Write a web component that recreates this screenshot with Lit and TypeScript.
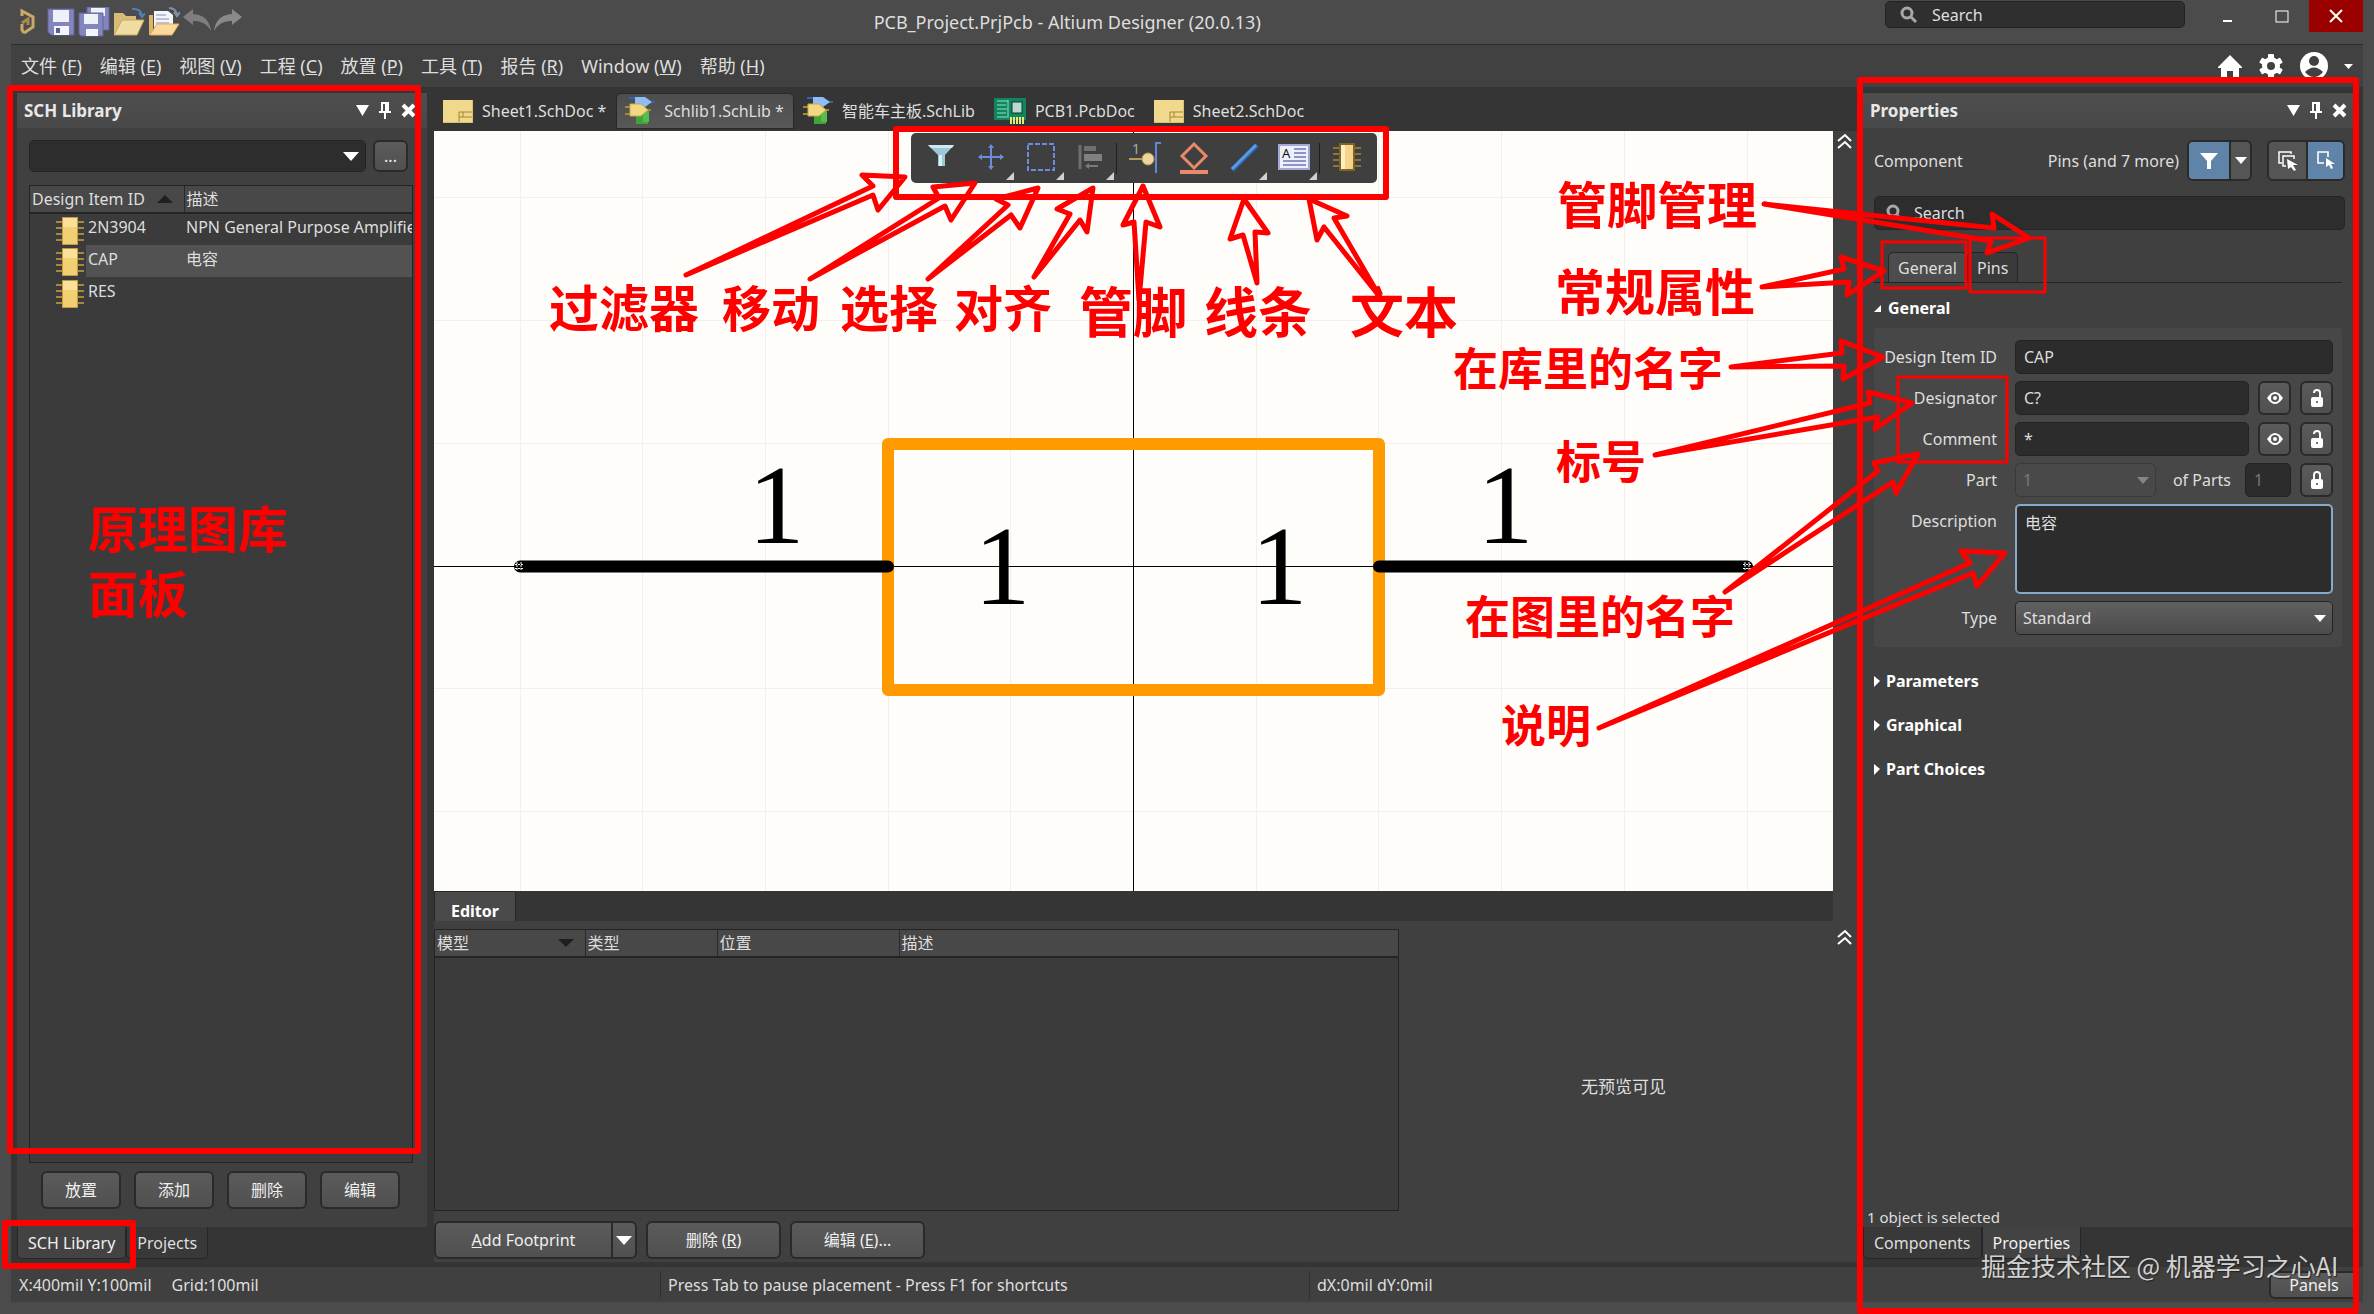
import { LitElement, html, svg, css } from "lit";
import { customElement, state } from "lit/decorators.js";
import { classMap } from "lit/directives/class-map.js";

type Point = [number, number];

/* ---------- icons ---------- */

const logoIcon = () => html`<svg width="18" height="28" viewBox="0 0 18 28" aria-hidden="true">
  <path d="M3 8 V3 L14 9 V19 L5 25 M3 16 V22 L5 25" fill="none" stroke="#c9a86b" stroke-width="3" />
  <path d="M3 15 L9 11 V17" fill="none" stroke="#a98a4e" stroke-width="3" />
</svg>`;

const floppy = svg`
  <path d="M1 1 H27 V27 H4 L1 24 Z" fill="#8385bd" stroke="#6264a0" stroke-width="1" />
  <rect x="6" y="2" width="16" height="12" fill="#eef2f8" />
  <rect x="7" y="18" width="15" height="9" fill="#f4f5fa" />
  <rect x="9" y="20" width="4" height="5" fill="#5b5d94" />`;

const saveIcon = () => html`<svg width="28" height="28" viewBox="0 0 28 28" aria-hidden="true">${floppy}</svg>`;

const saveAllIcon = () => html`<svg width="32" height="30" viewBox="0 0 32 30" aria-hidden="true">
  <path d="M9 0 H31 V23 H9 Z" fill="#8385bd" stroke="#6264a0" />
  <rect x="13" y="1" width="14" height="8" fill="#eef2f8" />
  <path d="M1 6 H25 V29 H3 L1 27 Z" fill="#8385bd" stroke="#6264a0" />
  <rect x="6" y="7" width="14" height="10" fill="#eef2f8" />
  <rect x="8" y="22" width="12" height="7" fill="#f4f5fa" />
</svg>`;

const openFolderIcon = () => html`<svg width="32" height="30" viewBox="0 0 32 30" aria-hidden="true">
  <path d="M1 6 H10 L13 9 H23 V28 H1 Z" fill="#d9bb78" />
  <path d="M1 28 L9 13 H31 L24 28 Z" fill="#f0dca0" stroke="#c7a660" />
  <path d="M19 2 Q28 1 29 9 M26 6 L29 10 L32 6" fill="none" stroke="#4c82b8" stroke-width="2" />
</svg>`;

const openDocIcon = () => html`<svg width="32" height="30" viewBox="0 0 32 30" aria-hidden="true">
  <path d="M1 8 H5 V28 H1 Z" fill="#e0b467" />
  <path d="M6 4 H20 L25 8 V24 H6 Z" fill="#f3f5fa" />
  <path d="M8 8 H18 M8 12 H21 M8 16 H21" stroke="#7f8fc0" stroke-width="1" />
  <path d="M2 28 L9 17 H31 L24 28 Z" fill="#fbd99b" stroke="#e2ae5c" />
  <path d="M21 1 Q28 1 29 8 M26 5 L29 9 L32 5" fill="none" stroke="#7f93a5" stroke-width="2" />
</svg>`;

const undoIcon = () => html`<svg width="28" height="26" viewBox="0 0 28 26" aria-hidden="true">
  <path d="M0 8 L10 0 V5 Q26 6 28 22 Q22 11 10 12 V16 Z" fill="#7e7e7e" />
</svg>`;

const redoIcon = () => html`<svg width="28" height="26" viewBox="0 0 28 26" aria-hidden="true">
  <path d="M28 8 L18 0 V5 Q2 6 0 22 Q6 11 18 12 V16 Z" fill="#8a8a8a" />
</svg>`;

const magnifierIcon = () => html`<svg width="18" height="18" viewBox="0 0 18 18" aria-hidden="true">
  <circle cx="7" cy="7" r="5" fill="none" stroke="#a8a8a8" stroke-width="3" />
  <path d="M11 11 L16 16" stroke="#a8a8a8" stroke-width="3" />
</svg>`;

const homeIcon = () => html`<svg width="24" height="24" viewBox="0 0 24 24" aria-hidden="true">
  <path d="M12 1 L24 13 V14 H21 V24 H15 V17 H9 V24 H3 V14 H0 V13 Z" fill="#fff" />
</svg>`;

const gearIcon = () => html`<svg width="26" height="26" viewBox="0 0 26 26" aria-hidden="true">
  <g fill="#fff">
    ${[0, 60, 120].map((a) => svg`<rect x="10" y="1" width="6" height="24" rx="1" transform="rotate(${a} 13 13)" />`)}
    <circle cx="13" cy="13" r="9" />
  </g>
  <circle cx="13" cy="13" r="4" fill="#414141" />
</svg>`;

const userIcon = () => html`<svg width="28" height="28" viewBox="0 0 28 28" aria-hidden="true">
  <circle cx="14" cy="14" r="14" fill="#fff" />
  <circle cx="14" cy="9" r="5" fill="#414141" />
  <path d="M5 20 Q14 11 23 20 Q19 25 14 25 Q9 25 5 20 Z" fill="#414141" />
</svg>`;

const triangleDown = (w: number, h: number, color = "#fff") =>
  html`<svg class="tri" width=${w} height=${h} viewBox="0 0 10 10" preserveAspectRatio="none" aria-hidden="true">
    <path d="M0 0 H10 L5 10 Z" fill=${color} />
  </svg>`;

const pinIcon = () => html`<svg width="12" height="18" viewBox="0 0 12 18" aria-hidden="true">
  <path d="M2 0 H10 V9 H12 V11 H7 V17 H5 V11 H0 V9 H2 Z M4 2 V9 H6 V2 Z" fill="#fff" fill-rule="evenodd" />
</svg>`;

const closeIcon = () => html`<svg width="15" height="15" viewBox="0 0 15 15" aria-hidden="true">
  <path d="M2 2 L13 13 M13 2 L2 13" stroke="#fff" stroke-width="4" />
</svg>`;

const chipIcon = () => html`<svg width="28" height="28" viewBox="0 0 28 28" aria-hidden="true">
  <path d="M0 5 H28 M0 11 H28 M0 17 H28 M0 23 H28" stroke="#a8893a" stroke-width="2" />
  <rect x="6" y="0" width="16" height="28" fill="#c29c45" />
  <rect x="7" y="1" width="14" height="26" fill="#f3cf74" />
  <rect x="7" y="1" width="14" height="9" fill="#fbe09a" />
</svg>`;

const sheetIcon = () => html`<svg width="30" height="23" viewBox="0 0 30 23" aria-hidden="true">
  <rect width="30" height="23" fill="#f0d98c" />
  <path d="M0 23 H30 V0" fill="none" stroke="#c9ab52" stroke-width="1" />
  <path d="M16 22 V12 H29 M16 17 H29 M20 12 V17" fill="none" stroke="#a5852f" stroke-width="1" />
</svg>`;

const schlibIcon = () => html`<svg width="30" height="30" viewBox="0 0 30 30" aria-hidden="true">
  <path d="M4 2 H12 M4 10 H12 M24 6 H30" stroke="#2f63b5" stroke-width="2" />
  <path d="M10 1 H20 L27 6 L20 11 H10 Z" fill="#8fbdf5" />
  <path d="M11 18 H23 V28 H11 Z" fill="#3fa53a" />
  <path d="M18 15 H24 V26 H18 Z" fill="#58bd4c" />
  <path d="M0 11 H8 M0 18 H8 M20 14 H26" stroke="#a58a35" stroke-width="2" />
  <path d="M5 8 H16 L23 14 L16 20 H5 Z" fill="#f3d783" stroke="#c9a94e" />
</svg>`;

const pcbIcon = () => html`<svg width="32" height="26" viewBox="0 0 32 26" aria-hidden="true">
  <rect width="32" height="22" fill="#10855e" />
  <path d="M3 3 H14 M3 7 H12 M3 11 H13 M3 15 H12 M3 19 H13 M14 2 V20" stroke="#8fe5be" stroke-width="1" />
  <rect x="18" y="4" width="10" height="11" fill="#bcd8d2" stroke="#063f2c" />
  <path d="M17 19 V26 M20 19 V26 M23 19 V26 M26 19 V26 M29 19 V26" stroke="#e3ea76" stroke-width="2" />
</svg>`;

const chevronsUp = () => html`<svg width="15" height="17" viewBox="0 0 15 17" aria-hidden="true">
  <path d="M1 8 L8 2 L14 8 M1 15 L8 9 L14 15" fill="none" stroke="#fff" stroke-width="2" />
</svg>`;

const funnelIcon = () => html`<svg width="18" height="18" viewBox="0 0 18 18" aria-hidden="true">
  <path d="M0 1 H18 L11 9 V17 H7 V9 Z" fill="#fff" />
</svg>`;

const pickAllIcon = () => html`<svg width="20" height="20" viewBox="0 0 20 20" aria-hidden="true">
  <path d="M4 12 H1 V1 H13 V3" fill="none" stroke="#fff" stroke-width="1.5" />
  <path d="M8 15 H5 V5 H16 V8" fill="none" stroke="#fff" stroke-width="1.5" />
  <path d="M9 8 L20 14 H15 L18 19 L16 20 L13 16 L10 18 Z" fill="#fff" />
</svg>`;

const pickOneIcon = () => html`<svg width="20" height="20" viewBox="0 0 20 20" aria-hidden="true">
  <path d="M8 12 H2 V1 H12 V6" fill="none" stroke="#fff" stroke-width="1.6" />
  <path d="M10 7 L19 13 H15 L17 17 L15 18 L13 14 L10 16 Z" fill="#fff" />
</svg>`;

const eyeIcon = () => html`<svg width="16" height="12" viewBox="0 0 16 12" aria-hidden="true">
  <path d="M0 6 Q8 -6 16 6 Q8 18 0 6 Z" fill="#fff" />
  <circle cx="8" cy="6" r="4" fill="#555" />
  <circle cx="8" cy="6" r="2" fill="#fff" />
</svg>`;

const lockIcon = (open: boolean) => html`<svg width="12" height="18" viewBox="0 0 12 18" aria-hidden="true">
  <path d=${open ? "M3 4 Q3 1 6 1 Q9 1 9 4 V9" : "M3 9 V4 Q3 1 6 1 Q9 1 9 4 V9"} fill="none" stroke="#fff" stroke-width="2" />
  <rect x="0" y="8" width="12" height="10" rx="2" fill="#fff" />
  <circle cx="6" cy="13" r="1" fill="#444" />
</svg>`;

/* ---------- floating tool bar ---------- */

interface Tool {
  label: string;
  menu?: boolean;
  icon: unknown;
}

const toolGroups: Tool[][] = [
  [
    {
      label: "过滤器",
      icon: svg`<path d="M4 5 H30 L21 15 V26 H14 V15 Z" fill="#9cc9d8" />
        <path d="M4 5 H30 L28 8 H7 Z" fill="#cfe9f0" /><path d="M15 15 H18 V26 H15 Z" fill="#d9eff5" />`,
    },
    {
      label: "移动",
      menu: true,
      icon: svg`<path d="M17 5 V29 M5 17 H29" stroke="#6c8cdb" stroke-width="2" />
        <path d="M17 4 L20 8 H14 Z M17 30 L20 26 H14 Z M4 17 L8 14 V20 Z M30 17 L26 14 V20 Z" fill="#6c8cdb" />`,
    },
    {
      label: "选择",
      menu: true,
      icon: svg`<rect x="4" y="4" width="26" height="26" fill="none" stroke="#6c8cdb" stroke-width="2" stroke-dasharray="5 2" />`,
    },
    {
      label: "对齐",
      menu: true,
      icon: svg`<path d="M6 5 V29" stroke="#6f6f6f" stroke-width="3" />
        <rect x="10" y="6" width="12" height="5" fill="#707070" /><rect x="10" y="14" width="18" height="7" fill="#808080" />
        <path d="M11 26 L15 23 V25 H24 V27 H15 V29 Z" fill="#7a7a7a" />`,
    },
  ],
  [
    {
      label: "管脚",
      icon: svg`<text x="5" y="14" class="pin-no">1</text><path d="M2 19 H16" stroke="#b79a5a" stroke-width="2" />
        <circle cx="21" cy="19" r="6" fill="#ecd49a" stroke="#b79a5a" />
        <path d="M34 3 H29 V33" fill="none" stroke="#5f86d8" stroke-width="2" />`,
    },
    {
      label: "端口",
      icon: svg`<path d="M17 4 L29 16 L17 28 L5 16 Z" fill="none" stroke="#e8896a" stroke-width="3" />
        <rect x="3" y="30" width="28" height="4" fill="#e8896a" />`,
    },
    {
      label: "线条",
      menu: true,
      icon: svg`<path d="M5 30 L30 5" stroke="#2c64b4" stroke-width="5" /><path d="M5 29 L29 5" stroke="#5a9be6" stroke-width="3" />`,
    },
    {
      label: "文本",
      menu: true,
      icon: svg`<rect x="2" y="5" width="30" height="24" fill="#edf0fa" stroke="#a3a8d8" stroke-width="2" />
        <text x="5" y="18" class="text-a">A</text>
        <path d="M17 9 H29 M17 13 H29 M17 17 H29 M6 21 H29 M6 25 H29" stroke="#8f94c4" stroke-width="2" />`,
    },
  ],
  [{ label: "器件", icon: svg`<g transform="translate(3 3)">
      <path d="M0 5 H28 M0 11 H28 M0 17 H28 M0 23 H28" stroke="#8b7437" stroke-width="2" />
      <rect x="6" y="0" width="16" height="28" fill="#7d6423" />
      <rect x="8" y="2" width="12" height="24" fill="#f6d58a" /><rect x="8" y="2" width="4" height="24" fill="#ffeec4" />
    </g>` }],
];

/* ---------- content ---------- */

const menus: [string, string][] = [
  ["文件", "F"], ["编辑", "E"], ["视图", "V"], ["工程", "C"], ["放置", "P"],
  ["工具", "T"], ["报告", "R"], ["Window", "W"], ["帮助", "H"],
];

const documents = [
  { name: "Sheet1.SchDoc *", icon: sheetIcon },
  { name: "Schlib1.SchLib *", icon: schlibIcon },
  { name: "智能车主板.SchLib", icon: schlibIcon },
  { name: "PCB1.PcbDoc", icon: pcbIcon },
  { name: "Sheet2.SchDoc", icon: sheetIcon },
];

const parts = [
  { id: "2N3904", text: "NPN General Purpose Amplifier" },
  { id: "CAP", text: "电容" },
  { id: "RES", text: "" },
];

/* Each arrow: tail, near junction, near barb, tip, far barb, far junction. */
const arrows: Point[][] = [
  [[686, 275], [873, 186], [862, 175], [905, 177], [878, 210], [873, 195]],
  [[810, 279], [939, 198], [933, 187], [975, 183], [951, 220], [945, 206]],
  [[928, 279], [1008, 205], [996, 199], [1038, 188], [1020, 228], [1011, 215]],
  [[1034, 277], [1070, 214], [1057, 209], [1093, 188], [1087, 232], [1080, 220]],
  [[1139, 300], [1134, 222], [1123, 225], [1143, 186], [1160, 227], [1146, 222]],
  [[1257, 283], [1243, 235], [1230, 239], [1244, 199], [1268, 233], [1255, 232]],
  [[1380, 297], [1324, 227], [1317, 240], [1309, 199], [1347, 216], [1334, 218]],
  [[1764, 204], [1994, 228], [1992, 214], [2029, 238], [1987, 253], [1991, 241]],
  [[1762, 287], [1844, 269], [1841, 257], [1884, 271], [1847, 295], [1849, 282]],
  [[1731, 367], [1842, 353], [1841, 341], [1883, 357], [1843, 379], [1844, 366]],
  [[1655, 455], [1870, 403], [1868, 392], [1912, 403], [1875, 429], [1878, 417]],
  [[1725, 592], [1878, 471], [1874, 463], [1918, 454], [1896, 493], [1893, 482]],
  [[1599, 728], [1970, 563], [1961, 551], [2005, 553], [1977, 586], [1973, 573]],
];

const notes: { x: number; y: number; size: number; text: string }[] = [
  { x: 549, y: 327, size: 50, text: "过滤器" },
  { x: 722, y: 327, size: 49, text: "移动" },
  { x: 840, y: 327, size: 49, text: "选择" },
  { x: 954, y: 327, size: 49, text: "对齐" },
  { x: 1079, y: 333, size: 54, text: "管脚" },
  { x: 1204, y: 333, size: 54, text: "线条" },
  { x: 1350, y: 333, size: 54, text: "文本" },
  { x: 1557, y: 224, size: 50, text: "管脚管理" },
  { x: 1555, y: 311, size: 50, text: "常规属性" },
  { x: 1453, y: 386, size: 45, text: "在库里的名字" },
  { x: 1556, y: 479, size: 45, text: "标号" },
  { x: 1465, y: 634, size: 45, text: "在图里的名字" },
  { x: 1501, y: 743, size: 45, text: "说明" },
  { x: 88, y: 548, size: 50, text: "原理图库" },
  { x: 88, y: 613, size: 50, text: "面板" },
];

const frames = [
  { x: 10, y: 88, w: 408, h: 1063, s: 6 },
  { x: 5, y: 1223, w: 128, h: 43, s: 6 },
  { x: 896, y: 129, w: 490, h: 68, s: 6 },
  { x: 1860, y: 80, w: 496, h: 1231, s: 6 },
  { x: 1882, y: 242, w: 84, h: 46, s: 3 },
  { x: 1970, y: 238, w: 75, h: 54, s: 3 },
  { x: 1898, y: 377, w: 109, h: 85, s: 3 },
];

@customElement("app-root")
export class AppRoot extends LitElement {
  @state() private activeDoc = 1;
  @state() private selectedPart = "CAP";

  static styles = css`
    :host {
      display: block;
      font-family: "Noto Sans", "Noto Sans CJK SC", sans-serif;
      font-size: 16px;
      line-height: 22px;
      color: #dedede;
    }
    * { box-sizing: border-box; }
    button, input, select, textarea { font: inherit; color: inherit; margin: 0; }
    button { padding: 0; border: 0; background: none; }
    svg { display: block; flex: none; }
    .app {
      position: relative;
      display: flex;
      flex-direction: column;
      height: 100vh;
      overflow: hidden;
      padding: 0 11px 12px;
      background: #4b4b4b;
    }

    /* title bar */
    .title-bar {
      flex: none;
      height: 44px;
      display: grid;
      grid-template-columns: 857fr auto 1095fr;
      background: #4b4b4b;
    }
    .quick { display: flex; align-items: center; padding-left: 8px; gap: 3px; }
    .quick button:first-child { margin-right: 7px; }
    .window-title { align-self: center; font-size: 18px; white-space: nowrap; }
    .window-side { display: flex; justify-content: flex-end; align-items: flex-start; }
    .top-search {
      display: flex; align-items: center; gap: 14px;
      width: 300px; height: 27px; padding: 0 14px;
      margin: 1px 16px 0 0;
      border: 1px solid #222; border-radius: 5px; background: #2f2f2f;
    }
    .bare { flex: 1; min-width: 0; padding: 0; border: 0; outline: 0; background: none; }
    .bare::placeholder { color: #dedede; opacity: 1; }
    .win { width: 54px; height: 32px; display: grid; place-items: center; }
    .win.close { background: #9b0000; }

    /* menu bar */
    .menu-bar {
      flex: none; height: 43px;
      display: flex; align-items: center; gap: 18px;
      padding: 0 10px;
      border-top: 1px solid #2c2c2c;
      background: #414141;
    }
    .menu-bar .entry { font-size: 18px; line-height: 26px; white-space: nowrap; }
    .account { margin-left: auto; display: flex; align-items: center; gap: 16px; }

    /* work area */
    .work {
      flex: 1; min-height: 0;
      display: grid;
      grid-template-columns: 410px minmax(0, 1fr) 495px;
      column-gap: 6px;
      padding: 0 5px 0 6px;
      background: #353535;
    }
    .dock { display: flex; flex-direction: column; min-height: 0; min-width: 0; padding-top: 6px; }
    .panel { flex: 1; min-height: 0; display: flex; flex-direction: column; background: #404040; }
    .panel-head {
      flex: none; height: 35px;
      display: flex; align-items: center; gap: 10px;
      padding: 0 11px 0 7px;
      background: linear-gradient(#4e4e4e, #484848);
    }
    .panel-head h2 { flex: 1; margin: 0; font-size: 17px; line-height: 24px; color: #e8e8e8; }
    .dock-tabs { flex: none; height: 40px; display: flex; align-items: flex-start; }
    .dock-tabs button {
      height: 32px; padding: 0 10px;
      border: 1px solid #262626; border-top: 0; border-radius: 0 0 5px 5px;
      background: #393939;
    }
    .dock-tabs button.on { background: #434343; color: #f0f0f0; }

    /* library panel */
    .lib-body { flex: 1; min-height: 0; display: flex; flex-direction: column; padding: 12px 14px 18px 12px; }
    .lib-filter { display: flex; gap: 7px; padding-right: 5px; margin-bottom: 13px; }
    .pick { display: grid; align-items: center; }
    .pick > * { grid-area: 1 / 1; }
    .pick > .tri { justify-self: end; margin-right: 7px; pointer-events: none; }
    .pick select {
      width: 100%; height: 100%; appearance: none; padding: 0 7px; outline: 0;
      border: 1px solid #242424; border-radius: 5px;
      background: linear-gradient(#606060, #4c4c4c);
    }
    .pick.dark { flex: 1; height: 32px; }
    .pick.dark select { background: #2d2d2d; }
    .btn {
      display: grid; place-items: center; height: 38px;
      border: 2px solid #2a2a2a; border-radius: 6px;
      background: linear-gradient(#5b5b5b, #505050);
      color: #f0f0f0; white-space: nowrap;
    }
    .btn.more { width: 35px; height: 32px; }
    .list { flex: 1; min-height: 0; overflow: hidden; border: 1px solid #232323; background: #3b3b3b; }
    table { width: 100%; border-collapse: collapse; table-layout: fixed; }
    th {
      font-weight: 400; text-align: left; white-space: nowrap;
      height: 27px; padding: 0 2px; background: #484848; border-bottom: 2px solid #252525;
    }
    th + th { border-left: 1px solid #2a2a2a; }
    td { height: 32px; padding: 0 0 5px 2px; white-space: nowrap; overflow: hidden; }
    .head-cell { display: flex; align-items: center; justify-content: space-between; padding-right: 9px; }
    .col-icon { width: 56px; }
    .col-id { width: 98px; }
    .col-model { width: 150px; }
    .col-type { width: 132px; }
    .col-place { width: 182px; }
    td.part-icon { padding: 2px 0 0 26px; }
    .list tr.on .value { background: #525252; }
    .lib-buttons { display: flex; gap: 13px; padding: 8px 0 0 12px; }
    .lib-buttons .btn { width: 80px; }

    /* document area */
    .center { display: flex; flex-direction: column; min-width: 0; min-height: 0; padding-left: 1px; }
    .doc-tabs { flex: none; height: 44px; display: flex; align-items: flex-end; padding-bottom: 2px; }
    .doc-tabs button {
      display: flex; align-items: center; gap: 9px;
      height: 36px; padding: 0 9px 0 8px; white-space: nowrap;
      border: 1px solid transparent; border-radius: 5px 5px 0 0;
    }
    .doc-tabs button.on { background: linear-gradient(#4d4d4d, #585858); border-color: #282828; }
    .canvas-row, .editor-row { display: flex; min-height: 0; }
    .canvas-row { flex: 1; }
    .editor-row { flex: none; height: 376px; border-bottom: 5px solid #353535; }
    .gutter { flex: none; width: 24px; display: flex; padding-left: 4px; background: #404040; }
    .gutter.low { padding-top: 36px; }
    .gutter button { height: 20px; }
    .canvas { position: relative; flex: 1; min-width: 0; background: #fffdfa; }
    .drawing { position: absolute; inset: 0; width: 100%; height: 100%; }
    .drawing .crisp { shape-rendering: crispEdges; }
    .pin-label { font-family: "Liberation Serif", serif; font-size: 113px; fill: #000; }
    .tool-layer { position: absolute; inset: 2px 0 auto 0; display: flex; justify-content: center; padding-left: 21px; }
    .tools { display: flex; align-items: center; height: 50px; padding: 0 5px; border-radius: 5px; background: #3f3f3f; }
    .tool { position: relative; width: 50px; height: 50px; display: grid; place-items: center; }
    .corner { position: absolute; right: 2px; bottom: 3px; }
    .tool-sep { width: 3px; height: 31px; border-left: 1px solid #1e1e1e; }
    .pin-no { font-size: 14px; fill: #aaaaaa; }
    .text-a { font-size: 13px; fill: #111; }

    /* model editor */
    .editor { flex: 1; min-width: 0; display: flex; flex-direction: column; background: #404040; }
    .editor-strip { flex: none; height: 30px; display: flex; background: #353535; }
    .editor-strip button {
      width: 82px; padding-top: 8px; font-weight: 700; color: #fff;
      border: 1px solid #262626; border-bottom: 0; background: #4a4a4a;
    }
    .editor-body { flex: 1; min-height: 0; display: grid; grid-template-columns: 965fr 434fr; padding: 8px 0 3px; }
    .models { display: flex; flex-direction: column; min-width: 0; }
    .model-buttons { display: flex; gap: 9px; padding-top: 10px; }
    .split { display: flex; width: 203px; }
    .split .btn:first-child { flex: 1; border-radius: 6px 0 0 6px; border-right-width: 1px; }
    .split .btn:last-child { width: 25px; border-radius: 0 6px 6px 0; border-left-width: 1px; }
    .w135 { width: 135px; }
    .preview { display: grid; place-items: center; padding: 0 0 14px 15px; font-size: 17px; }

    /* properties panel */
    .props { flex: 1; min-height: 0; display: flex; flex-direction: column; padding: 12px 16px 0 11px; }
    .scope { display: flex; align-items: center; height: 41px; margin-right: -3px; }
    .scope .kinds { margin-left: auto; padding-right: 8px; }
    .seg { display: flex; height: 41px; border: 2px solid #2a2a2a; border-radius: 6px; overflow: hidden; background: #555; }
    .seg button { width: 37px; display: grid; place-items: center; }
    .seg button + button { border-left: 2px solid #2a2a2a; }
    .seg button.blue { background: #5f84a8; }
    .seg .wide { width: 40px; }
    .seg .narrow { width: 21px; }
    .seg.pickers { margin-left: 15px; }
    .prop-search {
      display: flex; align-items: center; gap: 10px;
      height: 34px; margin-top: 15px; margin-right: -3px; padding: 0 11px;
      border: 1px solid #262626; border-radius: 5px; background: #2d2d2d;
    }
    .prop-tabs { display: flex; height: 31px; margin-top: 22px; padding-left: 14px; border-bottom: 1px solid #232323; }
    .prop-tabs button {
      padding: 0 9px; border: 1px solid #262626; border-bottom: 0; border-radius: 5px 5px 0 0; background: #3a3a3a;
    }
    .prop-tabs button.on { background: #4c4c4c; width: 79px; }
    .section {
      display: flex; align-items: center; gap: 6px;
      height: 44px; font-weight: 700; color: #fff; text-align: left;
    }
    .section.open { height: 34px; margin-top: 8px; gap: 7px; }
    .card {
      display: grid; grid-template-columns: 123px minmax(0, 1fr);
      column-gap: 18px; row-gap: 7px;
      margin: 3px 0 12px; padding: 12px 9px 12px 0;
      border-radius: 4px; background: #474747;
    }
    .card > label { text-align: right; line-height: 34px; white-space: nowrap; }
    .field {
      flex: 1; width: 100%; min-width: 0; height: 34px; padding: 0 8px; outline: 0;
      border: 1px solid #232323; border-radius: 5px; background: #2c2c2c;
    }
    textarea.field { display: block; height: 90px; padding: 6px 8px; resize: none; border: 2px solid #86a9cc; }
    .line { display: flex; align-items: center; gap: 9px; }
    .mini { width: 33px; height: 34px; flex: none; }
    .line .part { width: 141px; height: 34px; }
    .line .part select { background: #494949; border-color: #3a3a3a; color: #7a7a7a; opacity: 1; }
    .of-parts { flex: 1; text-align: right; padding-right: 5px; white-space: nowrap; }
    .field.count { flex: none; width: 46px; color: #777; }
    .kind { height: 34px; }
    .selection { margin-top: auto; padding: 0 4px; line-height: 20px; font-size: 15px; }

    /* status bar */
    .status { flex: none; height: 35px; display: flex; align-items: center; background: #404040; padding: 0 4px 0 8px; }
    .status .pos { width: 641px; display: flex; gap: 20px; white-space: nowrap; }
    .status .cell { padding-left: 7px; border-left: 1px solid #303030; line-height: 28px; white-space: nowrap; }
    .status .hint { width: 649px; }
    .status .btn { margin-left: auto; width: 90px; height: 28px; }

    /* annotation layer */
    .marks { position: absolute; inset: 0; width: 100%; height: 100%; pointer-events: none; }
    .marks .shape { fill: none; stroke: #ff0000; stroke-linejoin: round; }
    .note { font-family: "Noto Sans CJK SC", sans-serif; font-weight: 700; fill: #ff0000; }
    .credit { font-family: "Noto Sans CJK SC", sans-serif; font-size: 25px; fill: #d2d2d2; text-shadow: 1px 1px 1px #222; }
  `;

  private renderTitleBar() {
    return html`<header class="title-bar">
      <div class="quick">
        <button aria-label="Altium">${logoIcon()}</button>
        <button aria-label="保存">${saveIcon()}</button>
        <button aria-label="全部保存">${saveAllIcon()}</button>
        <button aria-label="打开">${openFolderIcon()}</button>
        <button aria-label="打开文档">${openDocIcon()}</button>
        <button aria-label="撤销">${undoIcon()}</button>
        <button aria-label="重做">${redoIcon()}</button>
      </div>
      <div class="window-title">PCB_Project.PrjPcb - Altium Designer (20.0.13)</div>
      <div class="window-side">
        <label class="top-search">${magnifierIcon()}<input class="bare" type="text" aria-label="Search" placeholder="Search" /></label>
        <button class="win" aria-label="最小化"><svg width="10" height="14"><path d="M0 12 H9" stroke="#fff" stroke-width="2" /></svg></button>
        <button class="win" aria-label="最大化"><svg width="14" height="13"><rect x="1" y="1" width="12" height="11" fill="none" stroke="#fff" /></svg></button>
        <button class="win close" aria-label="关闭"><svg width="14" height="14"><path d="M1 1 L13 13 M13 1 L1 13" stroke="#fff" stroke-width="2" /></svg></button>
      </div>
    </header>`;
  }

  private renderMenuBar() {
    return html`<nav class="menu-bar">
      ${menus.map(([name, key]) => html`<button class="entry">${name} (<u>${key}</u>)</button>`)}
      <div class="account">
        <button aria-label="主页">${homeIcon()}</button>
        <button aria-label="设置">${gearIcon()}</button>
        <button aria-label="帐户">${userIcon()}</button>
        <button aria-label="帐户菜单">${triangleDown(9, 5)}</button>
      </div>
    </nav>`;
  }

  private renderPanelHead(title: string) {
    return html`<div class="panel-head">
      <h2>${title}</h2>
      <button aria-label="面板菜单">${triangleDown(13, 11)}</button>
      <button aria-label="固定">${pinIcon()}</button>
      <button aria-label="关闭面板">${closeIcon()}</button>
    </div>`;
  }

  private renderLibrary() {
    return html`<aside class="dock">
      <section class="panel">
        ${this.renderPanelHead("SCH Library")}
        <div class="lib-body">
          <div class="lib-filter">
            <div class="pick dark"><select aria-label="过滤"><option></option></select>${triangleDown(16, 9)}</div>
            <button class="btn more" aria-label="更多">...</button>
          </div>
          <div class="list">
            <table>
              <colgroup><col class="col-icon" /><col class="col-id" /><col /></colgroup>
              <thead>
                <tr>
                  <th colspan="2"><div class="head-cell">Design Item ID
                    <svg width="16" height="8"><path d="M0 8 L8 0 L16 8 Z" fill="#1f1f1f" /></svg></div></th>
                  <th>描述</th>
                </tr>
              </thead>
              <tbody>
                ${parts.map((p) => html`<tr class=${classMap({ on: p.id === this.selectedPart })} @click=${() => (this.selectedPart = p.id)}>
                  <td class="part-icon">${chipIcon()}</td>
                  <td class="value">${p.id}</td>
                  <td class="value">${p.text}</td>
                </tr>`)}
              </tbody>
            </table>
          </div>
          <div class="lib-buttons">
            ${["放置", "添加", "删除", "编辑"].map((t) => html`<button class="btn">${t}</button>`)}
          </div>
        </div>
      </section>
      <div class="dock-tabs"><button class="on">SCH Library</button><button>Projects</button></div>
    </aside>`;
  }

  private renderDrawing() {
    const step = 122.7;
    const cols = Array.from({ length: 25 }, (_, i) => 1133.5 + (i - 12) * step);
    const rows = Array.from({ length: 15 }, (_, i) => 566 + (i - 7) * step);
    const handle = (x: number) => svg`<path d="M${x - 3} 562 V571 M${x + 1} 562 V571 M${x - 5} 564.5 H${x + 4} M${x - 5} 568.5 H${x + 4}"
      stroke="#fff" stroke-width="1" stroke-dasharray="2 1" />`;
    return html`<svg class="drawing" viewBox="434 131 1399 760" preserveAspectRatio="xMidYMid slice">
      <g class="crisp" stroke="#f4efec" stroke-width="1">
        ${cols.map((x) => svg`<path d="M${x} -500 V1600" />`)}
        ${rows.map((y) => svg`<path d="M-500 ${y} H2900" />`)}
      </g>
      <path class="crisp" d="M-500 566.5 H2900 M1133.5 -500 V1600" stroke="#000" stroke-width="1" />
      <rect x="888" y="444" width="491" height="246" fill="none" stroke="#ff9a00" stroke-width="12" stroke-linejoin="round" />
      <path d="M520 566.5 H888 M1379 566.5 H1747" stroke="#000" stroke-width="12" stroke-linecap="round" />
      ${handle(520)} ${handle(1748)}
      <text class="pin-label" x="748" y="543">1</text>
      <text class="pin-label" x="974" y="604">1</text>
      <text class="pin-label" x="1251" y="604">1</text>
      <text class="pin-label" x="1477" y="543">1</text>
    </svg>`;
  }

  private renderTools() {
    return html`<div class="tool-layer"><div class="tools">
      ${toolGroups.map((group, i) => html`
        ${i ? html`<span class="tool-sep"></span>` : null}
        ${group.map((t) => html`<button class="tool" aria-label=${t.label}>
          <svg width="34" height="36" viewBox="0 0 34 36" aria-hidden="true">${t.icon}</svg>
          ${t.menu ? html`<svg class="corner" width="8" height="8"><path d="M8 0 V8 H0 Z" fill="#d0d0d0" /></svg>` : null}
        </button>`)}`)}
    </div></div>`;
  }

  private renderCenter() {
    return html`<main class="center">
      <div class="doc-tabs">
        ${documents.map((d, i) => html`<button class=${classMap({ on: i === this.activeDoc })} @click=${() => (this.activeDoc = i)}>
          ${d.icon()}<span>${d.name}</span></button>`)}
      </div>
      <div class="canvas-row">
        <div class="canvas">${this.renderDrawing()}${this.renderTools()}</div>
        <div class="gutter"><button aria-label="展开">${chevronsUp()}</button></div>
      </div>
      <div class="editor-row">
        <section class="editor">
          <div class="editor-strip"><button>Editor</button></div>
          <div class="editor-body">
            <div class="models">
              <div class="list">
                <table>
                  <colgroup><col class="col-model" /><col class="col-type" /><col class="col-place" /><col /></colgroup>
                  <thead><tr>
                    <th><div class="head-cell">模型${triangleDown(16, 8, "#1f1f1f")}</div></th>
                    <th>类型</th><th>位置</th><th>描述</th>
                  </tr></thead>
                </table>
              </div>
              <div class="model-buttons">
                <div class="split">
                  <button class="btn"><span><u>A</u>dd Footprint</span></button>
                  <button class="btn" aria-label="更多模型">${triangleDown(16, 9)}</button>
                </div>
                <button class="btn w135"><span>删除 (<u>R</u>)</span></button>
                <button class="btn w135"><span>编辑 (<u>E</u>)...</span></button>
              </div>
            </div>
            <div class="preview">无预览可见</div>
          </div>
        </section>
        <div class="gutter low"><button aria-label="展开预览">${chevronsUp()}</button></div>
      </div>
    </main>`;
  }

  private renderProperties() {
    const closed = (t: string) => html`<button class="section">
      <svg width="6" height="11"><path d="M0 0 L6 5 L0 11 Z" fill="#fff" /></svg>${t}</button>`;
    return html`<aside class="dock">
      <section class="panel">
        ${this.renderPanelHead("Properties")}
        <div class="props">
          <div class="scope">
            <span>Component</span>
            <span class="kinds">Pins (and 7 more)</span>
            <div class="seg">
              <button class="blue wide" aria-label="过滤">${funnelIcon()}</button>
              <button class="narrow" aria-label="过滤菜单">${triangleDown(12, 7)}</button>
            </div>
            <div class="seg pickers">
              <button aria-label="选择全部">${pickAllIcon()}</button>
              <button class="blue" aria-label="选择单个">${pickOneIcon()}</button>
            </div>
          </div>
          <label class="prop-search">${magnifierIcon()}<input class="bare" type="text" aria-label="Search properties" placeholder="Search" /></label>
          <div class="prop-tabs"><button class="on">General</button><button>Pins</button></div>
          <button class="section open"><svg width="7" height="7"><path d="M7 0 V7 H0 Z" fill="#fff" /></svg>General</button>
          <div class="card">
            <label for="item">Design Item ID</label>
            <input id="item" class="field" type="text" .value=${"CAP"} />
            <label for="designator">Designator</label>
            <div class="line">
              <input id="designator" class="field" type="text" .value=${"C?"} />
              <button class="btn mini" aria-label="显示">${eyeIcon()}</button>
              <button class="btn mini" aria-label="锁定">${lockIcon(true)}</button>
            </div>
            <label for="comment">Comment</label>
            <div class="line">
              <input id="comment" class="field" type="text" .value=${"*"} />
              <button class="btn mini" aria-label="显示">${eyeIcon()}</button>
              <button class="btn mini" aria-label="锁定">${lockIcon(true)}</button>
            </div>
            <label for="part">Part</label>
            <div class="line">
              <div class="pick part"><select id="part" disabled><option>1</option></select>${triangleDown(12, 7, "#858585")}</div>
              <label class="of-parts" for="count">of Parts</label>
              <input id="count" class="field count" type="text" disabled .value=${"1"} />
              <button class="btn mini" aria-label="锁定">${lockIcon(false)}</button>
            </div>
            <label for="description">Description</label>
            <textarea id="description" class="field" .value=${"电容"}></textarea>
            <label for="kind">Type</label>
            <div class="pick kind"><select id="kind"><option>Standard</option></select>${triangleDown(12, 7)}</div>
          </div>
          ${closed("Parameters")} ${closed("Graphical")} ${closed("Part Choices")}
        </div>
        <div class="selection">1 object is selected</div>
      </section>
      <div class="dock-tabs"><button>Components</button><button class="on">Properties</button></div>
    </aside>`;
  }

  private renderMarks() {
    return html`<svg class="marks" viewBox="0 0 2374 1314" preserveAspectRatio="none">
      ${frames.map((f) => svg`<rect class="shape" x=${f.x} y=${f.y} width=${f.w} height=${f.h} stroke-width=${f.s} />`)}
      ${arrows.map((a) => svg`<polygon class="shape" stroke-width="5" points=${a.map((p) => p.join(",")).join(" ")} />`)}
      ${notes.map((n) => svg`<text class="note" x=${n.x} y=${n.y} font-size=${n.size}>${n.text}</text>`)}
      <text class="credit" x="1981" y="1276">掘金技术社区 @ 机器学习之心AI</text>
    </svg>`;
  }

  render() {
    return html`<div class="app">
      ${this.renderTitleBar()} ${this.renderMenuBar()}
      <div class="work">${this.renderLibrary()} ${this.renderCenter()} ${this.renderProperties()}</div>
      <footer class="status">
        <div class="pos"><span>X:400mil Y:100mil</span><span>Grid:100mil</span></div>
        <div class="cell hint">Press Tab to pause placement - Press F1 for shortcuts</div>
        <div class="cell">dX:0mil dY:0mil</div>
        <button class="btn">Panels</button>
      </footer>
      ${this.renderMarks()}
    </div>`;
  }
}
